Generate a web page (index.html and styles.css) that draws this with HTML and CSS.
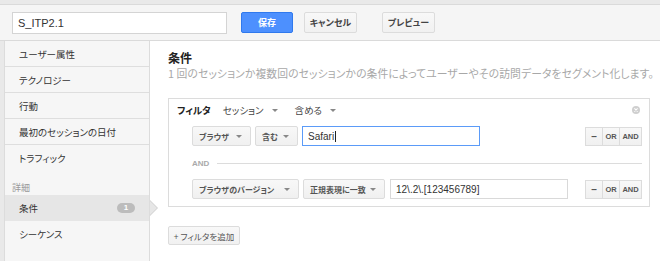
FILE: index.html
```html
<!DOCTYPE html>
<html lang="ja">
<head>
    <meta charset="UTF-8">
    <title>セグメント - 条件</title>
    <link rel="stylesheet" href="styles.css">
</head>
<body>
    <div class="frame">
        <div class="topbar">
            <input class="name-input" type="text" value="S_ITP2.1">
            <button class="btn btn-blue">保存</button>
            <button class="btn btn-cancel">キャンセル</button>
            <button class="btn btn-preview">プレビュー</button>
        </div>

        <div class="body">
            <div class="sidebar">
                <div class="side-item">ユーザー属性</div>
                <div class="side-item">テクノロジー</div>
                <div class="side-item">行動</div>
                <div class="side-item">最初のセッションの日付</div>
                <div class="side-item last">トラフィック</div>
                <div class="side-label">詳細</div>
                <div class="side-item active">条件 <span class="badge">1</span></div>
                <div class="side-item last">シーケンス</div>
            </div>

            <div class="main">
                <h2 class="title">条件</h2>
                <p class="subtitle">1 回のセッションか複数回のセッションかの条件によってユーザーやその訪問データをセグメント化します。</p>

                <div class="filter-box">
                    <div class="filter-head">
                        <span class="filter-label">フィルタ</span>
                        <span class="head-drop">セッション <i class="caret"></i></span>
                        <span class="head-drop">含める <i class="caret"></i></span>
                        <svg class="close" width="8" height="8" viewBox="0 0 8 8">
                            <circle cx="4" cy="4" r="4" fill="#cfcfcf"/>
                            <path d="M2.4 2.4 L5.6 5.6 M5.6 2.4 L2.4 5.6" stroke="#fff" stroke-width="1.1"/>
                        </svg>
                    </div>

                    <div class="cond-row">
                        <span class="drop w-browser">ブラウザ <i class="caret"></i></span>
                        <span class="drop w-contains">含む <i class="caret"></i></span>
                        <div class="value focus">Safari<span class="cursor"></span></div>
                        <div class="ops">
                            <span class="op op-minus">–</span><span class="op">OR</span><span class="op op-and">AND</span>
                        </div>
                    </div>

                    <div class="sep"><span>AND</span><i></i></div>

                    <div class="cond-row">
                        <span class="drop w-version">ブラウザのバージョン <i class="caret"></i></span>
                        <span class="drop w-regex">正規表現に一致 <i class="caret"></i></span>
                        <div class="value">12\.2\.[123456789]</div>
                        <div class="ops">
                            <span class="op op-minus">–</span><span class="op">OR</span><span class="op op-and">AND</span>
                        </div>
                    </div>
                </div>

                <button class="btn btn-add">+ フィルタを追加</button>
            </div>
        </div>
    </div>
</body>
</html>
```

FILE: styles.css
```css
body { margin: 0; font-family: "Noto Sans CJK JP", "Liberation Sans", sans-serif; font-feature-settings: "palt"; color: #333; background: #fff; }
.frame { display: flex; flex-direction: column; height: 261px; overflow: hidden; background: #e9e9e9; padding-top: 4px; box-sizing: border-box; }
.topbar { display: flex; align-items: flex-start; height: 37px; flex: none; padding: 7px 0 0 12px; box-sizing: border-box; background: #f5f5f5; border-top: 1px solid #dadada; border-bottom: 1px solid #dadada; }
.name-input { width: 215px; height: 22px; box-sizing: border-box; border: 1px solid #d4d4d4; padding: 0 5px; font-family: "Liberation Sans", sans-serif; font-size: 11px; color: #333; background: #fff; margin: 0 14px 0 0; outline: none; }
.btn { height: 21px; box-sizing: border-box; padding: 0; border: 1px solid #dcdcdc; border-radius: 2px; background: linear-gradient(#f8f8f8, #f1f1f1); color: #444; font-family: "Noto Sans CJK JP", sans-serif; font-feature-settings: "palt"; font-size: 9px; font-weight: bold; cursor: pointer; }
.btn-blue { width: 52px; margin-right: 11px; background: #4d90fe; border-color: #3079ed; color: #fff; }
.btn-cancel { width: 53px; margin-right: 25px; }
.btn-preview { width: 53px; }

.body { display: flex; flex: 1; padding-left: 4px; }
.sidebar { flex: none; width: 144px; background: #f6f6f6; border-left: 1px solid #dcdcdc; border-right: 1px solid #dcdcdc; }
.side-item { position: relative; display: flex; align-items: center; height: 25px; padding: 0 14px; border-bottom: 1px solid #dedede; font-size: 9.5px; color: #333; }
.side-item.last { border-bottom: none; }
.side-label { padding: 11px 0 0 7px; height: 14px; line-height: 14px; font-size: 9px; color: #999; }
.side-item.active { background: #e6e6e6; height: 26px; border-bottom: none; }
.side-item.active::before { content: ""; position: absolute; right: -9px; top: 5px; border: 8px solid transparent; border-left: 8px solid #cfcfcf; border-right: 0; }
.side-item.active::after { content: ""; position: absolute; right: -8px; top: 6px; border: 7px solid transparent; border-left: 7px solid #e6e6e6; border-right: 0; }
.badge { margin-left: auto; width: 18px; height: 10px; border-radius: 5px; background: #bcbcbc; color: #fff; font-size: 8px; font-weight: bold; line-height: 10px; text-align: center; font-family: "Liberation Sans", sans-serif; }

.main { flex: 1; min-width: 0; background: #fff; padding: 9px 10px 0 18px; }
.title { margin: 0; font-size: 12px; line-height: 16px; font-weight: bold; color: #222; }
.subtitle { margin: 0; font-size: 10.8px; line-height: 14px; letter-spacing: 0.1px; color: #a8a8a8; white-space: nowrap; }

.filter-box { margin-top: 18px; border: 1px solid #dcdcdc; padding: 4px 7px 7px 8px; }
.filter-head { display: flex; align-items: center; height: 14px; font-size: 9.5px; }
.filter-label { font-weight: bold; color: #222; margin-right: 12px; }
.head-drop { display: flex; align-items: center; gap: 8px; margin-right: 17px; color: #444; }
.close { margin-left: auto; margin-right: 2px; }
.caret { display: inline-block; border-top: 3px solid #888; border-left: 3px solid transparent; border-right: 3px solid transparent; }

.cond-row { display: flex; align-items: center; gap: 4px; margin: 9px 0 0 15px; height: 20px; }
.drop { display: flex; align-items: center; justify-content: space-between; height: 20px; box-sizing: border-box; padding: 0 8px 0 6px; border: 1px solid #dcdcdc; border-radius: 2px; background: linear-gradient(#f8f8f8, #f0f0f0); font-size: 8px; font-weight: bold; color: #555; white-space: nowrap; }
.w-browser { width: 59px; }
.w-contains { width: 43px; }
.w-version { width: 107px; }
.w-regex { width: 82px; margin-right: 1px; }
.value { display: flex; align-items: center; width: 178px; height: 20px; box-sizing: border-box; border: 1px solid #d9d9d9; padding: 0 5px; font-family: "Liberation Sans", sans-serif; font-size: 10px; color: #333; }
.value.focus { border-color: #5b9bf8; }
.cursor { display: inline-block; width: 1px; height: 11px; background: #222; margin-left: 1px; }
.ops { display: flex; margin-left: auto; height: 19px; }
.op { display: flex; align-items: center; justify-content: center; width: 18px; height: 19px; box-sizing: border-box; border: 1px solid #dcdcdc; margin-left: -1px; background: linear-gradient(#f8f8f8, #f0f0f0); font-family: "Liberation Sans", sans-serif; font-size: 7.5px; font-weight: bold; color: #555; }
.op-minus { font-size: 10px; }
.op-and { width: 23px; }

.sep { display: flex; align-items: center; margin: 10px 0 0 15px; height: 14px; }
.sep span { font-family: "Liberation Sans", sans-serif; font-size: 8px; font-weight: bold; color: #aaa; margin-right: 8px; }
.sep i { flex: 1; border-top: 1px solid #dcdcdc; }

.btn-add { margin-top: 19px; height: 19px; width: 72px; font-size: 8.5px; font-weight: normal; color: #555; }
```
